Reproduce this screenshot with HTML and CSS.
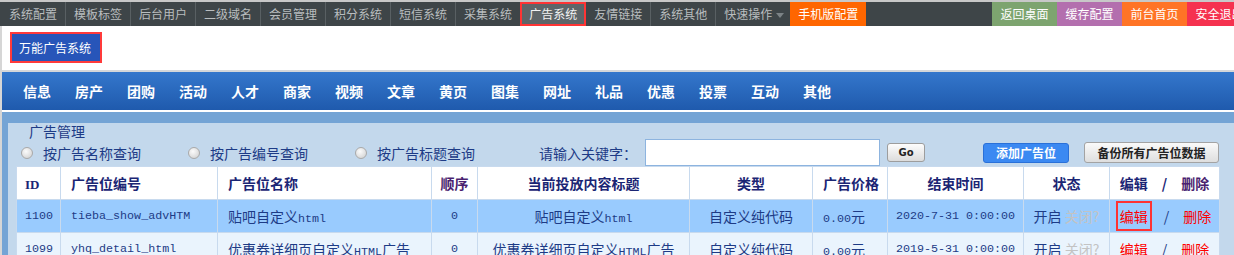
FILE: index.html
```html
<!DOCTYPE html>
<html lang="zh-CN">

<head>
    <meta charset="UTF-8">
    <meta name="viewport" content="width=device-width, initial-scale=1.0">
    <title>广告管理</title>
    <link rel="stylesheet" href="styles.css">
</head>

<body>

    <!-- Top Menu -->
    <div class="topbar">
        <div class="topbar-inner">
            <ul class="menu">
                <li>系统配置</li>
                <li>模板标签</li>
                <li>后台用户</li>
                <li>二级域名</li>
                <li>会员管理</li>
                <li>积分系统</li>
                <li>短信系统</li>
                <li>采集系统</li>
                <li class="active">广告系统</li>
                <li>友情链接</li>
                <li>系统其他</li>
                <li class="drop">快速操作<span class="caret"></span></li>
                <li class="mobile">手机版配置</li>
            </ul>
            <ul class="quick">
                <li class="green">返回桌面</li>
                <li class="purple">缓存配置</li>
                <li class="orange">前台首页</li>
                <li class="red">安全退出</li>
            </ul>
        </div>
    </div>

    <div class="page">

        <!-- Sub system -->
        <div class="sys">
            <span class="sys-btn">万能广告系统</span>
        </div>

        <!-- Channel Nav -->
        <div class="channel">
            <a href="#">信息</a>
            <a href="#">房产</a>
            <a href="#">团购</a>
            <a href="#">活动</a>
            <a href="#">人才</a>
            <a href="#">商家</a>
            <a href="#">视频</a>
            <a href="#">文章</a>
            <a href="#">黄页</a>
            <a href="#">图集</a>
            <a href="#">网址</a>
            <a href="#">礼品</a>
            <a href="#">优惠</a>
            <a href="#">投票</a>
            <a href="#">互动</a>
            <a href="#">其他</a>
        </div>

        <div class="main">
            <div class="panel">
                <div class="panel-title">广告管理</div>

                <!-- Search Bar -->
                <div class="toolbar">
                    <label class="opt"><input type="radio" name="stype">按广告名称查询</label>
                    <label class="opt"><input type="radio" name="stype">按广告编号查询</label>
                    <label class="opt"><input type="radio" name="stype">按广告标题查询</label>
                    <span class="kw">请输入关键字：</span>
                    <input type="text" class="kw-input">
                    <button class="btn-go">Go</button>
                    <button class="btn-add">添加广告位</button>
                    <button class="btn-backup">备份所有广告位数据</button>
                </div>

                <!-- Ad List -->
                <table class="ad-table">
                    <colgroup>
                        <col style="width: 44px">
                        <col style="width: 157px">
                        <col style="width: 214px">
                        <col style="width: 46px">
                        <col style="width: 212px">
                        <col style="width: 123px">
                        <col style="width: 75px">
                        <col style="width: 136px">
                        <col style="width: 86px">
                        <col style="width: 110px">
                    </colgroup>
                    <tr>
                        <th class="id"><span class="id-head">ID</span></th>
                        <th>广告位编号</th>
                        <th>广告位名称</th>
                        <th class="c link">顺序</th>
                        <th class="c">当前投放内容标题</th>
                        <th class="c">类型</th>
                        <th>广告价格</th>
                        <th class="c">结束时间</th>
                        <th class="c">状态</th>
                        <th class="c">编辑<span class="sep">/</span><span class="link">删除</span></th>
                    </tr>
                    <tr class="hl">
                        <td class="id en">1100</td>
                        <td class="en">tieba_show_advHTM</td>
                        <td>贴吧自定义<span class="en">html</span></td>
                        <td class="c en">0</td>
                        <td class="c">贴吧自定义<span class="en">html</span></td>
                        <td class="c">自定义纯代码</td>
                        <td><span class="en">0.00</span>元</td>
                        <td class="c en">2020-7-31 0:00:00</td>
                        <td class="c">开启 <span class="off">关闭?</span></td>
                        <td class="c"><span class="edit focus">编辑</span><span class="sep">/</span><span class="del">删除</span></td>
                    </tr>
                    <tr class="row">
                        <td class="id en">1099</td>
                        <td class="en">yhq_detail_html</td>
                        <td>优惠券详细页自定义<span class="en">HTML</span>广告</td>
                        <td class="c en">0</td>
                        <td class="c">优惠券详细页自定义<span class="en">HTML</span>广告</td>
                        <td class="c">自定义纯代码</td>
                        <td><span class="en">0.00</span>元</td>
                        <td class="c en">2019-5-31 0:00:00</td>
                        <td class="c">开启 <span class="off">关闭?</span></td>
                        <td class="c"><span class="edit">编辑</span><span class="sep">/</span><span class="del">删除</span></td>
                    </tr>
                </table>
            </div>
        </div>
    </div>

</body>
</html>
```

FILE: styles.css
```css
body {
    margin: 0;
    padding: 0;
    background: #fff;
    font-family: "Noto Sans CJK SC", sans-serif;
    font-size: 12px;
    overflow: hidden;
}

ul {
    list-style: none;
    margin: 0;
    padding: 0;
}

/* Top Menu */
.topbar {
    border-top: 2px solid #c8c8c8;
    background: #3e4548;
    height: 24px;
    overflow: hidden;
}

.topbar-inner {
    display: flex;
    min-width: 1252px;
    height: 24px;
}

.menu,
.quick {
    display: flex;
}

.quick {
    margin-left: auto;
}

.menu li,
.quick li {
    line-height: 24px;
    padding: 0 8px;
    color: #b9bdbf;
    white-space: nowrap;
}

.menu li:first-child {
    padding-left: 9px;
}

.menu li + li {
    border-left: 1px solid #596063;
}

.menu li.active {
    border: 2px solid #ff3434;
    background: #5e6568;
    color: #f2f2f2;
    padding: 0 7px;
    line-height: 20px;
}

.menu li.active + li,
.menu li.mobile {
    border-left: none;
}

.menu li.drop {
    padding-right: 6px;
}

.caret {
    display: inline-block;
    margin-left: 4px;
    vertical-align: middle;
    border-left: 4px solid transparent;
    border-right: 4px solid transparent;
    border-top: 5px solid #7c8386;
}

.menu li.mobile {
    background: #ff6600;
    color: #fff;
}

.quick li {
    padding: 0 8.5px;
    color: #fff;
}

.quick .green { background: #7da46f; }
.quick .purple { background: #b36fae; }
.quick .orange { background: #ff7426; }
.quick .red { background: #f5324f; }

/* Page */
.page {
    border-left: 2px solid #d6d6d6;
}

.sys {
    padding: 6px 0 7px 8px;
}

.sys-btn {
    display: inline-block;
    border: 2px solid #ff3a3a;
    background: #2755b9;
    color: #fff;
    line-height: 27px;
    padding: 0 9px 0 7px;
}

.channel {
    display: flex;
    align-items: center;
    height: 38px;
    border-top: 2px solid #d4d7da;
    margin-bottom: 2px;
    padding-left: 21px;
    background: linear-gradient(#3477cc, #1f5aad);
}

.channel a {
    color: #fff;
    font-size: 14px;
    font-weight: bold;
    margin-right: 24px;
    text-decoration: none;
}

.main {
    background: #74a4d5;
    padding: 11px 0 0 6px;
}

.panel {
    background: #c3d8ec;
    padding: 0 15px 0 8px;
    color: #1d3b86;
    font-size: 14px;
}

.panel-title {
    line-height: 16px;
    padding-left: 13px;
}

/* Search Bar */
.toolbar {
    display: flex;
    align-items: center;
    height: 27px;
    padding-left: 5px;
}

.opt {
    display: flex;
    align-items: center;
    margin-right: 47px;
}

.opt input {
    appearance: none;
    width: 12px;
    height: 12px;
    margin: 1px 10px 0 0;
    border: 1px solid #a9a9a9;
    border-radius: 50%;
    background: radial-gradient(circle at 40% 35%, #fbfbfb, #cdcdcd);
}

.kw {
    margin-left: 17px;
}

.kw-input {
    width: 235px;
    height: 27px;
    box-sizing: border-box;
    margin-left: 8px;
    border: 1px solid #8db4df;
    background: #fff;
    outline: none;
}

.btn-go {
    width: 38px;
    height: 19px;
    margin-left: 7px;
    padding: 0;
    border: 1px solid #9d9d9d;
    border-radius: 3px;
    background: linear-gradient(#fdfdfd, #dcdcdc);
    color: #222;
    font: bold 10px "DejaVu Sans", sans-serif;
}

.btn-add {
    width: 86px;
    height: 20px;
    margin-left: auto;
    padding: 0;
    border: 1px solid #2a70d8;
    border-radius: 3px;
    background: #3b89f2;
    color: #fff;
    font: bold 12px "Noto Sans CJK SC", sans-serif;
}

.btn-backup {
    width: 135px;
    height: 21px;
    margin-left: 15px;
    padding: 0;
    border: 1px solid #a3a3a3;
    border-radius: 3px;
    background: linear-gradient(#fafafa, #dedede);
    color: #222;
    font: bold 12px "Noto Sans CJK SC", sans-serif;
}

/* Ad List */
.ad-table {
    width: 100%;
    border-collapse: collapse;
    table-layout: fixed;
    background: #fff;
}

.ad-table th,
.ad-table td {
    height: 32px;
    padding: 0 10px;
    border: 1px solid #c8daee;
    text-align: left;
    white-space: nowrap;
    overflow: hidden;
}

.ad-table th {
    font-weight: bold;
    color: #1b2574;
}

.ad-table td {
    color: #1d3b86;
}

.ad-table .c {
    padding: 0;
    text-align: center;
}

.ad-table .id {
    padding-left: 8px;
}

.id-head {
    font-family: "Liberation Serif", serif;
    font-size: 13px;
}

.ad-table th.link,
.ad-table th .link {
    color: #4a1f70;
}

.en {
    font-family: "Liberation Mono", monospace;
    font-size: 11.7px;
}

.hl td {
    background: #99cbfe;
}

.row td {
    background: #eaf4fd;
}

.off {
    color: #c3c3c3;
}

.edit,
.del {
    color: #ff0000;
}

.focus {
    outline: 2px solid #f33;
    outline-offset: 0;
    padding: 3px 2px;
}

.sep {
    margin: 0 14px;
}
```
